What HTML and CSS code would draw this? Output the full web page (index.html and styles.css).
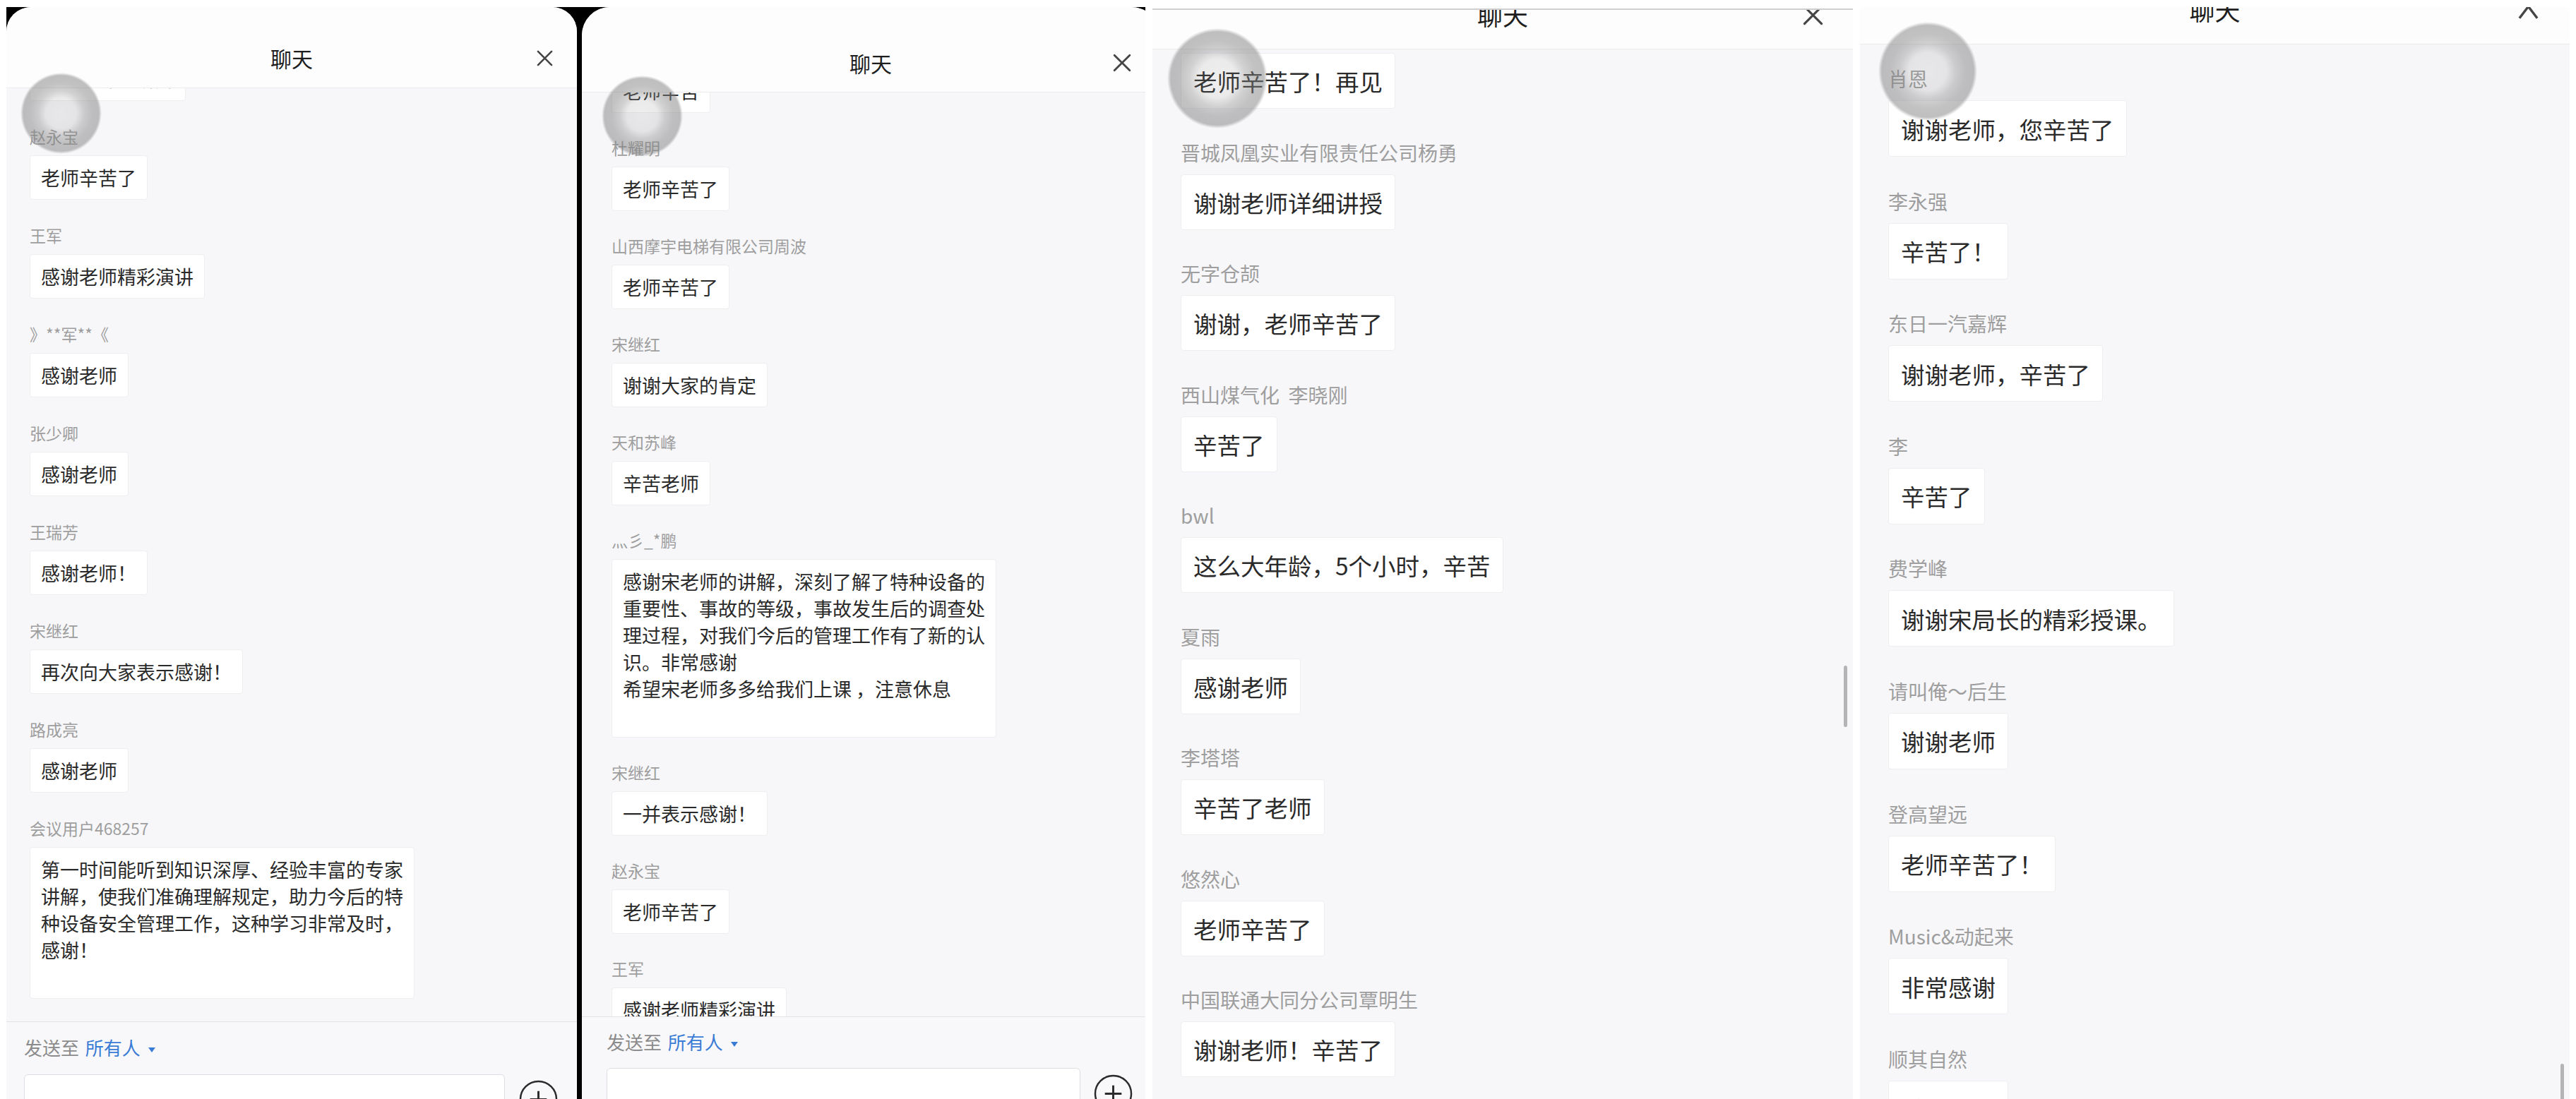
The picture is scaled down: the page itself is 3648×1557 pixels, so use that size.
FILE: index.html
```html
<!DOCTYPE html>
<html lang="zh-CN">
<head>
<meta charset="UTF-8">
<meta name="viewport" content="width=device-width, initial-scale=1.0">
<title>聊天</title>
<link rel="stylesheet" href="styles.css">
</head>
<body>

<div class="board">

    <!-- shot 1 -->
    <section class="shot shot-1">
        <div class="phone">
            <div class="card">
                <header class="head">
                    <span class="title">聊天</span>
                    <svg class="close" viewBox="0 0 24 24"><path d="M2 2L22 22M22 2L2 22" stroke="#454545" stroke-width="2.6" stroke-linecap="round"/></svg>
                </header>
                <div class="list">
                    <div class="scroll">
                        <div class="msg"><div class="bubble">感谢老师的讲解</div></div>
                        <div class="msg"><div class="name">赵永宝</div><div class="bubble">老师辛苦了</div></div>
                        <div class="msg"><div class="name">王军</div><div class="bubble">感谢老师精彩演讲</div></div>
                        <div class="msg"><div class="name">》**军**《</div><div class="bubble">感谢老师</div></div>
                        <div class="msg"><div class="name">张少卿</div><div class="bubble">感谢老师</div></div>
                        <div class="msg"><div class="name">王瑞芳</div><div class="bubble">感谢老师！</div></div>
                        <div class="msg"><div class="name">宋继红</div><div class="bubble">再次向大家表示感谢！</div></div>
                        <div class="msg"><div class="name">路成亮</div><div class="bubble">感谢老师</div></div>
                        <div class="msg"><div class="name">会议用户468257</div><div class="bubble">第一时间能听到知识深厚、经验丰富的专家<br>讲解，使我们准确理解规定，助力今后的特<br>种设备安全管理工作，这种学习非常及时，<br>感谢！<br><br></div></div>
                    </div>
                </div>
                <footer class="foot">
                    <div class="send-to">发送至 <span class="who">所有人</span><i class="caret"></i></div>
                    <div class="compose">
                        <div class="field"></div>
                        <svg class="plus" viewBox="0 0 56 56"><circle cx="28" cy="28" r="26" fill="none" stroke="#2b2b2b" stroke-width="2.5"/><path d="M28 16V40M16 28H40" stroke="#2b2b2b" stroke-width="3"/></svg>
                    </div>
                </footer>
            </div>
        </div>
        <div class="touch"></div>
    </section>

    <!-- shot 2 -->
    <section class="shot shot-2">
        <div class="phone">
            <div class="card">
                <header class="head">
                    <span class="title">聊天</span>
                    <svg class="close" viewBox="0 0 24 24"><path d="M2 2L22 22M22 2L2 22" stroke="#454545" stroke-width="2.6" stroke-linecap="round"/></svg>
                </header>
                <div class="list">
                    <div class="scroll">
                        <div class="msg"><div class="bubble">老师辛苦</div></div>
                        <div class="msg"><div class="name">杜耀明</div><div class="bubble">老师辛苦了</div></div>
                        <div class="msg"><div class="name">山西摩宇电梯有限公司周波</div><div class="bubble">老师辛苦了</div></div>
                        <div class="msg"><div class="name">宋继红</div><div class="bubble">谢谢大家的肯定</div></div>
                        <div class="msg"><div class="name">天和苏峰</div><div class="bubble">辛苦老师</div></div>
                        <div class="msg"><div class="name">灬彡_*鹏</div><div class="bubble">感谢宋老师的讲解，深刻了解了特种设备的<br>重要性、事故的等级，事故发生后的调查处<br>理过程，对我们今后的管理工作有了新的认<br>识。非常感谢<br>希望宋老师多多给我们上课 ，注意休息<br><br></div></div>
                        <div class="msg"><div class="name">宋继红</div><div class="bubble">一并表示感谢！</div></div>
                        <div class="msg"><div class="name">赵永宝</div><div class="bubble">老师辛苦了</div></div>
                        <div class="msg"><div class="name">王军</div><div class="bubble">感谢老师精彩演讲</div></div>
                    </div>
                </div>
                <footer class="foot">
                    <div class="send-to">发送至 <span class="who">所有人</span><i class="caret"></i></div>
                    <div class="compose">
                        <div class="field"></div>
                        <svg class="plus" viewBox="0 0 56 56"><circle cx="28" cy="28" r="26" fill="none" stroke="#2b2b2b" stroke-width="2.5"/><path d="M28 16V40M16 28H40" stroke="#2b2b2b" stroke-width="3"/></svg>
                    </div>
                </footer>
            </div>
        </div>
        <div class="touch"></div>
    </section>

    <!-- shot 3 -->
    <section class="shot shot-3">
        <div class="card">
            <header class="head">
                <span class="title">聊天</span>
                <svg class="close" viewBox="0 0 24 24"><path d="M2 2L22 22M22 2L2 22" stroke="#454545" stroke-width="2.6" stroke-linecap="round"/></svg>
            </header>
            <div class="list">
                <div class="scroll">
                    <div class="msg"><div class="bubble">老师辛苦了！再见</div></div>
                    <div class="msg"><div class="name">晋城凤凰实业有限责任公司杨勇</div><div class="bubble">谢谢老师详细讲授</div></div>
                    <div class="msg"><div class="name">无字仓颉</div><div class="bubble">谢谢，老师辛苦了</div></div>
                    <div class="msg"><div class="name">西山煤气化&nbsp;&nbsp;李晓刚</div><div class="bubble">辛苦了</div></div>
                    <div class="msg"><div class="name">bwl</div><div class="bubble">这么大年龄，5个小时，辛苦</div></div>
                    <div class="msg"><div class="name">夏雨</div><div class="bubble">感谢老师</div></div>
                    <div class="msg"><div class="name">李塔塔</div><div class="bubble">辛苦了老师</div></div>
                    <div class="msg"><div class="name">悠然心</div><div class="bubble">老师辛苦了</div></div>
                    <div class="msg"><div class="name">中国联通大同分公司覃明生</div><div class="bubble">谢谢老师！辛苦了</div></div>
                </div>
            </div>
        </div>
        <div class="touch"></div>
        <div class="scrollbar"></div>
    </section>

    <!-- shot 4 -->
    <section class="shot shot-4">
        <div class="card">
            <header class="head">
                <span class="title">聊天</span>
                <svg class="chevron" viewBox="0 0 32 22"><path d="M3 21L16 4L29 21" fill="none" stroke="#454545" stroke-width="3.5"/></svg>
            </header>
            <div class="list">
                <div class="scroll">
                    <div class="msg"><div class="name">肖恩</div><div class="bubble">谢谢老师，您辛苦了</div></div>
                    <div class="msg"><div class="name">李永强</div><div class="bubble">辛苦了！</div></div>
                    <div class="msg"><div class="name">东日一汽嘉辉</div><div class="bubble">谢谢老师，辛苦了</div></div>
                    <div class="msg"><div class="name">李</div><div class="bubble">辛苦了</div></div>
                    <div class="msg"><div class="name">费学峰</div><div class="bubble">谢谢宋局长的精彩授课。</div></div>
                    <div class="msg"><div class="name">请叫俺～后生</div><div class="bubble">谢谢老师</div></div>
                    <div class="msg"><div class="name">登高望远</div><div class="bubble">老师辛苦了！</div></div>
                    <div class="msg"><div class="name">Music&amp;动起来</div><div class="bubble">非常感谢</div></div>
                    <div class="msg"><div class="name">顺其自然</div><div class="bubble">感谢老师</div></div>
                </div>
            </div>
        </div>
        <div class="touch"></div>
        <div class="scrollbar"></div>
    </section>

</div>

</body>
</html>
```

FILE: styles.css
```css
body {
    margin: 0;
    background: #ffffff;
    font-family: "Noto Sans CJK SC", "Noto Sans", sans-serif;
    color: #2a2a2a;
}

.board {
    display: flex;
    width: 3648px;
    height: 1557px;
    overflow: hidden;
}

/* one screenshot column */
.shot {
    position: relative;
    flex: none;
    height: 1557px;
    overflow: hidden;
    box-sizing: border-box;
}

.shot-1 { width: 819px; padding: 10px 0 0 9px; }
.shot-2 { width: 803px; padding-top: 10px; }
.shot-3 { width: 1007px; padding: 12px 0 0 10px; }
.shot-4 { width: 1019px; padding: 10px 0 0 5px; }

.phone {
    height: 100%;
    background: #000000;
}

.shot-2 .phone {
    padding-left: 5px;
}

.card {
    display: flex;
    flex-direction: column;
    height: 100%;
    background: #f7f7fa;
    overflow: hidden;
    box-sizing: border-box;
}

.shot-1 .card { width: 808px; border-radius: 35px 35px 0 0; }
.shot-2 .card { width: 818px; border-radius: 40px 40px 0 0; }
.shot-3 .card { width: 992px; border-top: 2px solid #cfcfd1; }
.shot-4 .card { width: 1005px; }

/* header */
.head {
    flex: none;
    display: grid;
    grid-template-columns: 1fr auto 1fr;
    background: #fdfdfd;
    border-bottom: 1px solid #ebebed;
    box-sizing: border-box;
    overflow: hidden;
}

.title {
    grid-column: 2;
    color: #1e1e1e;
    font-size: 30px;
    line-height: 40px;
}

.head svg {
    grid-column: 3;
    justify-self: end;
}

.shot-1 .head { height: 115px; padding: 30px 34px 0; align-items: center; }
.shot-1 .close { width: 23px; height: 23px; }

.shot-2 .head { height: 121px; padding: 38px 40px 0; align-items: center; }
.shot-2 .close { width: 26px; height: 26px; }

.shot-3 .head { height: 56px; padding: 0 42px; align-items: start; }
.shot-3 .title { font-size: 36px; margin-top: -14.5px; }
.shot-3 .close { width: 29px; height: 29px; margin-top: -7.5px; }

.shot-4 .head { height: 53px; padding: 0 43px; align-items: start; }
.shot-4 .title { font-size: 36px; margin-top: -17.5px; }
.shot-4 .chevron { width: 31px; height: 22px; margin-top: -5px; }

/* message list */
.list {
    flex: 1;
    min-height: 0;
    overflow: hidden;
}

.msg {
    display: flex;
    flex-direction: column;
    align-items: flex-start;
}

.name {
    color: #9e9e9e;
    white-space: nowrap;
}

.bubble {
    background: #ffffff;
    border: 1px solid #eeeef1;
    border-radius: 4px;
    white-space: nowrap;
}

.shot-1 .scroll { margin-top: -45px; padding-left: 33px; }
.shot-2 .scroll { margin-top: -34px; padding-left: 42px; }
.shot-3 .scroll { margin-top: 5px; padding-left: 40px; }
.shot-4 .scroll { padding-top: 30px; padding-left: 40px; }

.shot-1 .name,
.shot-2 .name {
    font-size: 23px;
    line-height: 30px;
    margin-bottom: 12px;
}

.shot-1 .bubble,
.shot-2 .bubble {
    font-size: 27px;
    line-height: 38px;
    padding: 11.5px 15px;
}

.shot-1 .msg { margin-bottom: 35px; }
.shot-2 .msg { margin-bottom: 34px; }

.shot-3 .name,
.shot-4 .name {
    font-size: 28px;
    line-height: 36px;
    margin-bottom: 13px;
}

.shot-3 .bubble,
.shot-4 .bubble {
    font-size: 33.5px;
    line-height: 47px;
    padding: 15px 17px;
}

.shot-4 .bubble { padding: 15.5px 17px; }

.shot-3 .msg { margin-bottom: 43.5px; }
.shot-4 .msg { margin-bottom: 44.6px; }

/* footer */
.foot {
    flex: none;
    box-sizing: border-box;
    border-top: 1px solid #e3e3e6;
    background: #f8f8fa;
    overflow: hidden;
}

.shot-1 .foot { height: 110px; padding: 18px 27px 0 25px; }
.shot-2 .foot { height: 117px; padding: 17px 38px 0 35px; }

.send-to {
    font-size: 26px;
    line-height: 36px;
    color: #8b8b8b;
}

.who {
    color: #3a7cd5;
    margin-left: 3px;
}

.caret {
    display: inline-block;
    vertical-align: middle;
    margin-left: 11px;
    border-left: 5px solid transparent;
    border-right: 5px solid transparent;
    border-top: 7px solid #3a7cd5;
}

.compose {
    display: flex;
    align-items: flex-start;
    gap: 20px;
    margin-top: 20px;
}

.shot-2 .compose { gap: 19px; margin-top: 19px; }

.field {
    flex: 1;
    height: 80px;
    background: #ffffff;
    border: 1px solid #dedee2;
    border-radius: 6px;
}

.plus {
    flex: none;
    width: 55px;
    height: 55px;
    margin-top: 8px;
}

.shot-2 .plus { margin-top: 9px; }

/* touch indicator left by the screen recorder */
.touch {
    position: absolute;
    border-radius: 50%;
    background: radial-gradient(circle closest-side,
        rgba(128, 128, 128, 0.13) 0%,
        rgba(128, 128, 128, 0.16) 38%,
        rgba(128, 128, 128, 0.36) 56%,
        rgba(128, 128, 128, 0.48) 76%,
        rgba(128, 128, 128, 0.5) 93%,
        rgba(128, 128, 128, 0) 100%);
}

.shot-1 .touch { left: 29px; top: 103px; width: 115px; height: 115px; }
.shot-2 .touch { left: 33px; top: 107px; width: 115px; height: 115px; }
.shot-3 .touch { left: 31px; top: 40px; width: 142px; height: 142px; }
.shot-4 .touch { left: 31px; top: 31px; width: 140px; height: 140px; }

.scrollbar {
    position: absolute;
    width: 5px;
    border-radius: 3px;
    background: #b4b4b6;
}

.shot-3 .scrollbar { left: 989px; top: 943px; height: 87px; }
.shot-4 .scrollbar { left: 997px; top: 1507px; height: 60px; }
```
